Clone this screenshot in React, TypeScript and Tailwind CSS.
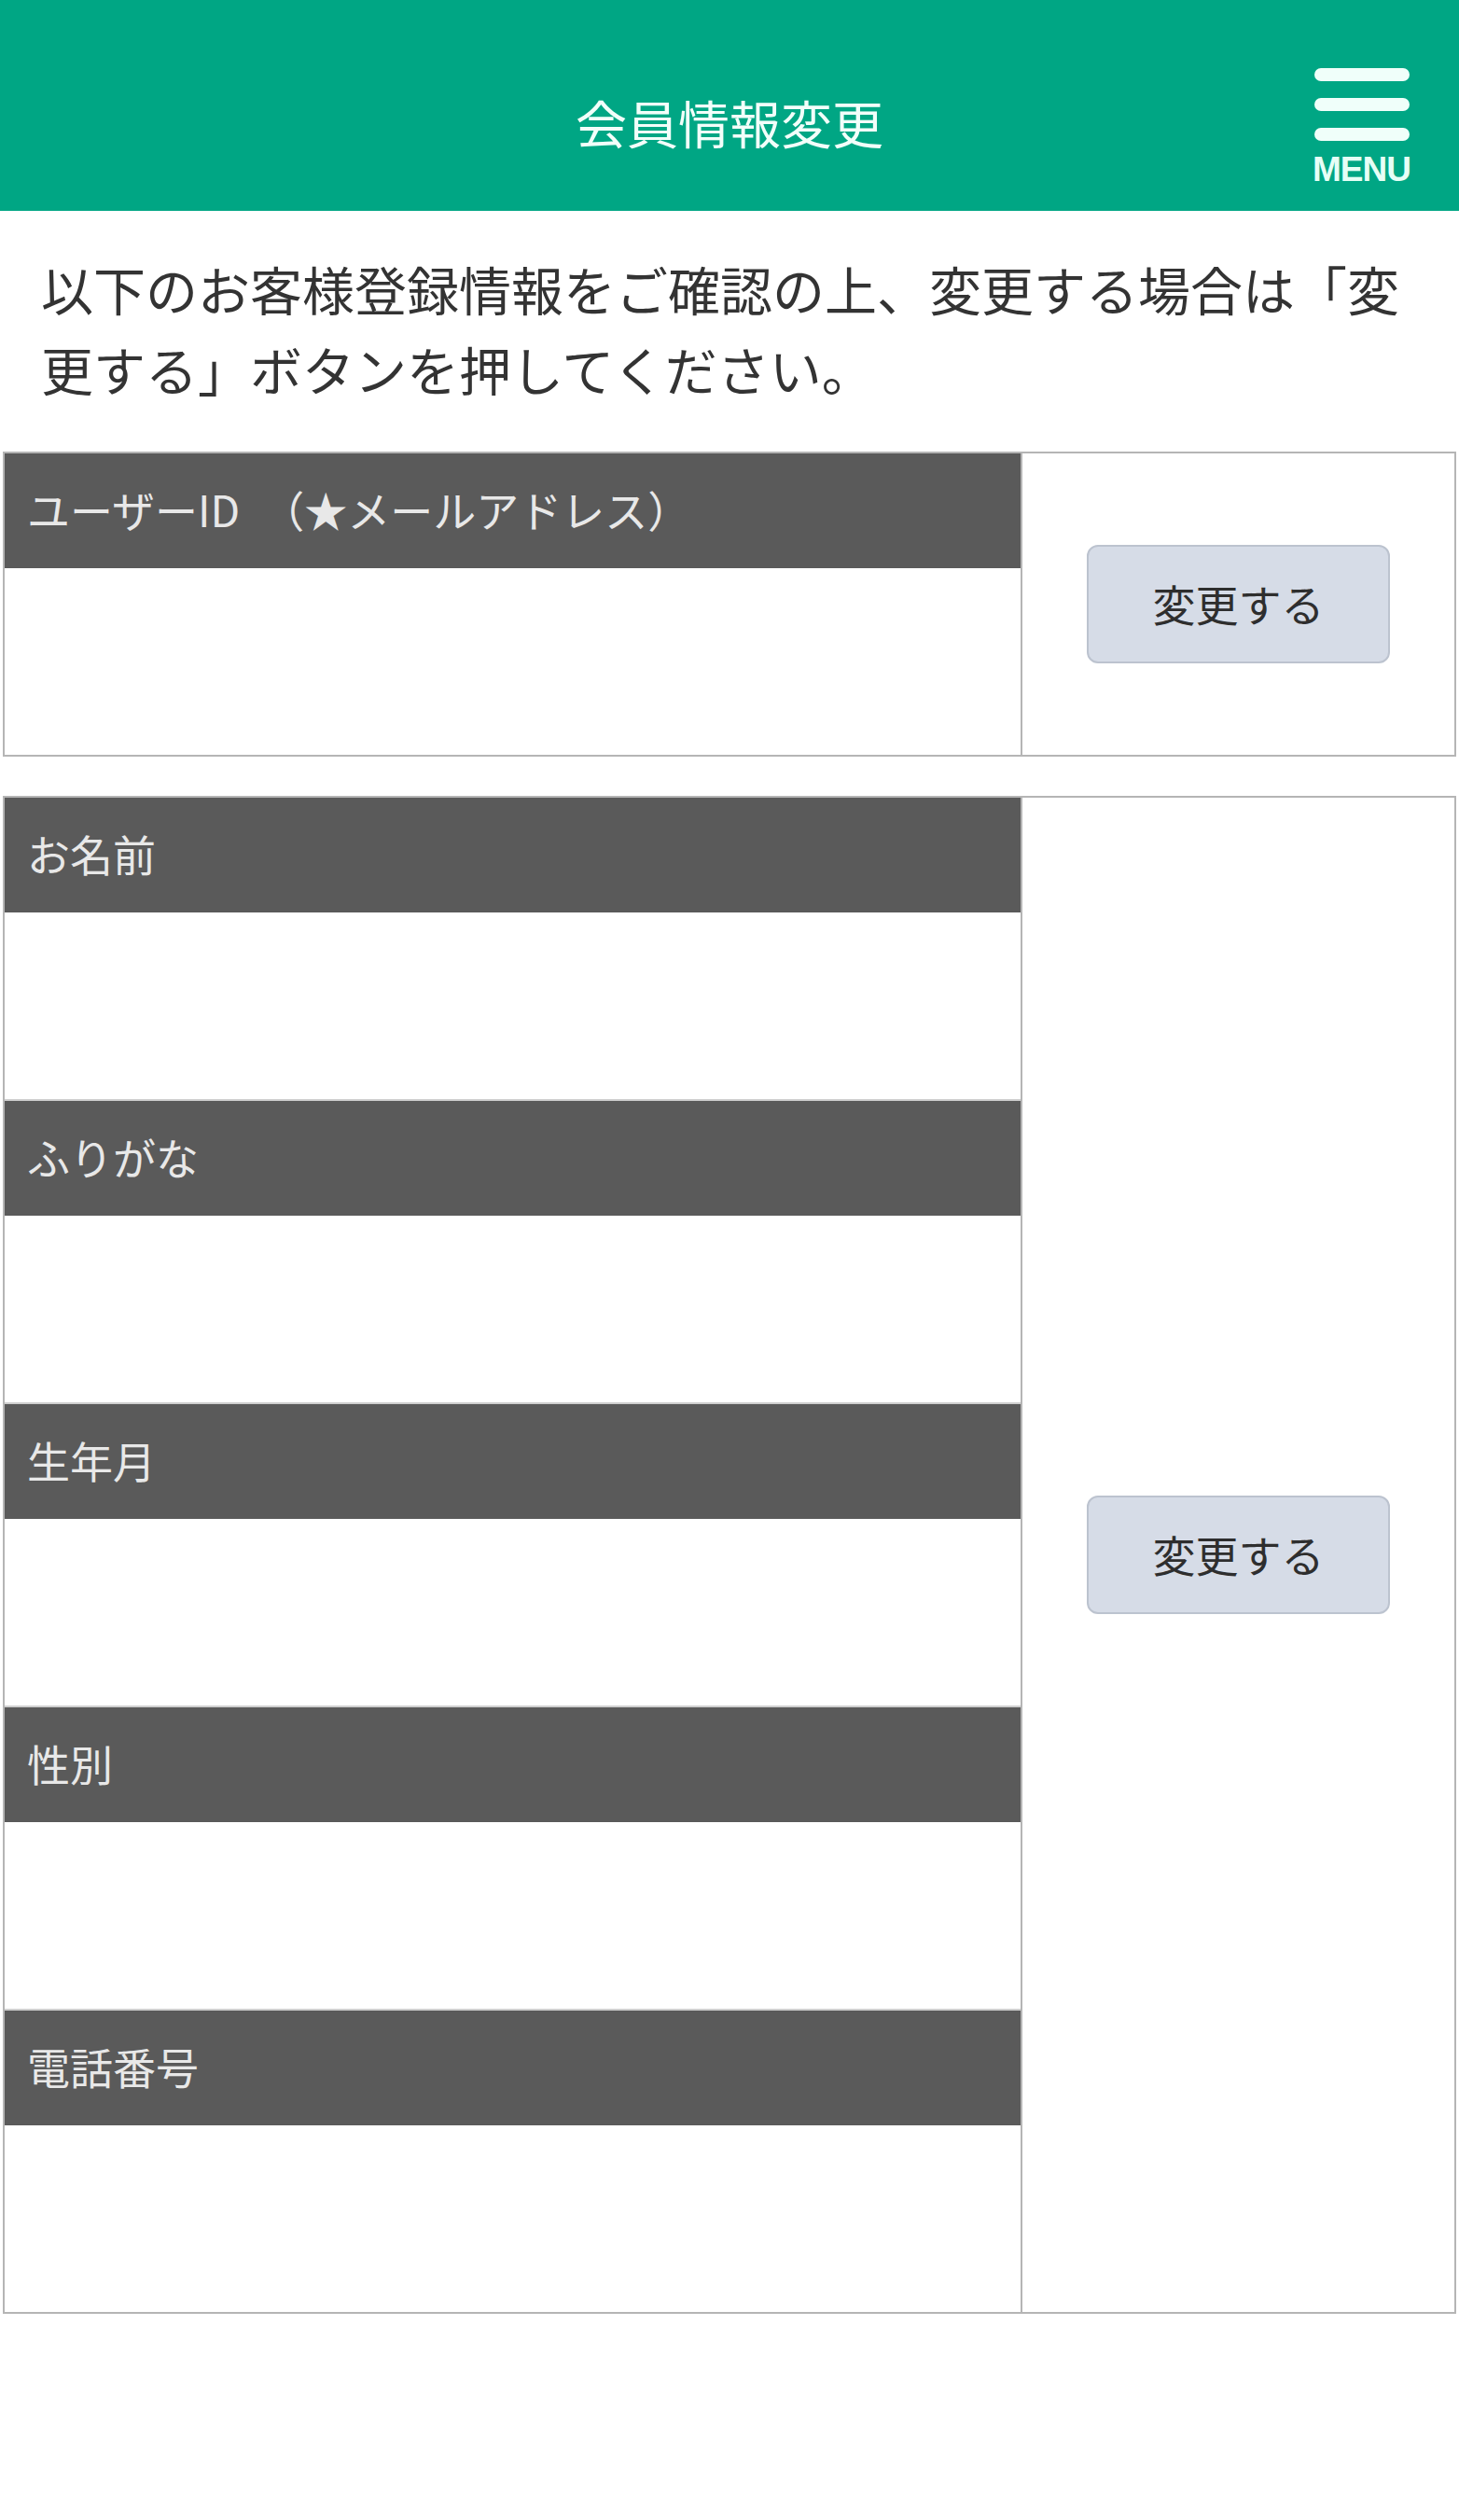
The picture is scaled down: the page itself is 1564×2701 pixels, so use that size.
const jp = { fontFamily: '"Noto Sans CJK JP", "Noto Sans", sans-serif' };

const sections = [
  ["ユーザーID　（★メールアドレス）"],
  ["お名前", "ふりがな", "生年月", "性別", "電話番号"],
];

function ChangeButton() {
  return (
    <button className="w-[325px] h-[127px] rounded-[12px] border-2 border-[#bcc3cf] bg-[#d6dce7] text-[46px] text-[#2e2e2e] leading-none pb-[4px]">
      変更する
    </button>
  );
}

export default function App() {
  return (
    <div className="w-[1564px] min-h-[2701px] bg-white" style={jp}>
      {/* Header */}
      <header className="relative h-[226px] bg-[#00a684] flex items-center justify-center pt-[34px]">
        <h1 className="text-[55px] font-normal text-[#f2fffa] leading-none">会員情報変更</h1>
        <div className="absolute right-[52px] top-[73px] flex flex-col items-center">
          <div className="flex flex-col gap-[18px] w-[102px]">
            <span className="block h-[14px] rounded-full bg-[#f0fffa]" />
            <span className="block h-[14px] rounded-full bg-[#f0fffa]" />
            <span className="block h-[14px] rounded-full bg-[#f0fffa]" />
          </div>
          <span
            className="mt-[12px] text-[37px] font-bold leading-none text-[#e6fff6] tracking-[-1px]"
            style={{ fontFamily: '"Liberation Sans", Arial, sans-serif' }}
          >
            MENU
          </span>
        </div>
      </header>

      {/* Intro */}
      <p className="px-[44px] pt-[40px] text-[56px] leading-[86px] text-[#333]">
        以下のお客様登録情報をご確認の上、変更する場合は「変更する」ボタンを押してください。
      </p>

      {/* Tables */}
      <div className="mt-[46px] mx-[3px] flex flex-col gap-[42px]">
        {sections.map((fields, i) => (
          <div key={i} className="flex border-2 border-[#b5b5b5]">
            <div className="w-[1089px] flex flex-col">
              {fields.map((label, j) => (
                <div key={label} className={j > 0 ? "border-t-2 border-[#cfcfcf]" : ""}>
                  <div className="h-[123px] bg-[#5a5a5a] flex items-center pl-[24px] pb-[4px] text-[46px] text-[#e8e8e8]">
                    {label}
                  </div>
                  <div className="h-[200px] bg-white" />
                </div>
              ))}
            </div>
            <div className="flex-1 border-l-2 border-[#b5b5b5] flex items-center justify-center">
              <ChangeButton />
            </div>
          </div>
        ))}
      </div>
    </div>
  );
}
